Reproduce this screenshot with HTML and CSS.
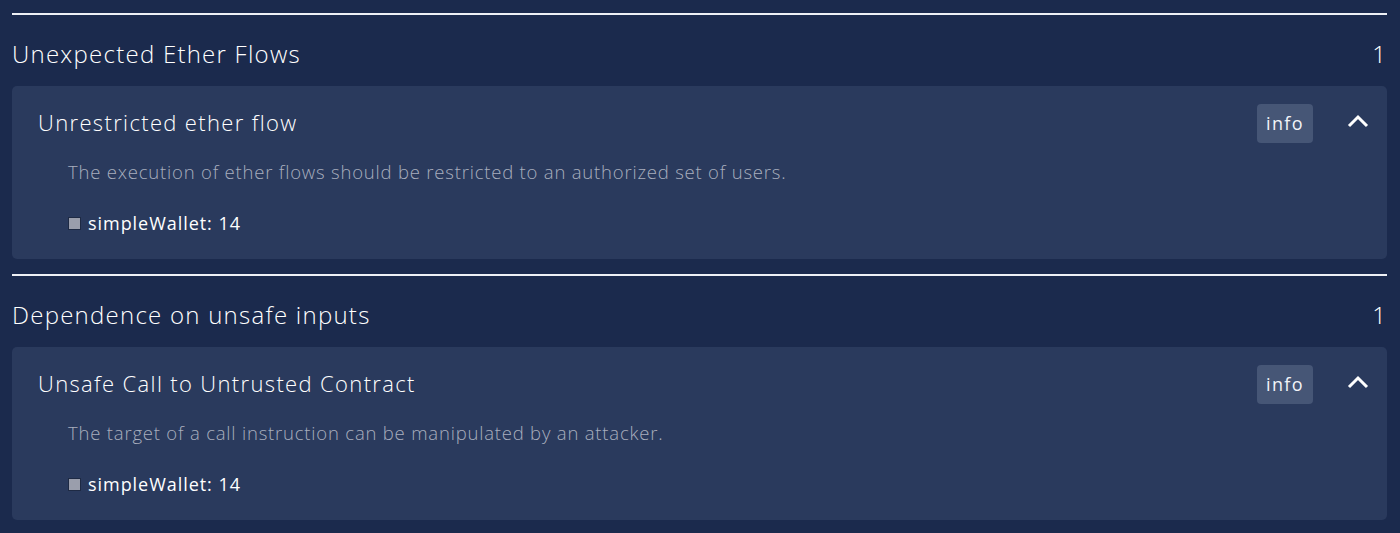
FILE: index.html
```html
<!DOCTYPE html>
<html>
<head>
<meta charset="utf-8">
<link rel="stylesheet" href="styles.css">
</head>
<body>
<main class="page">
  <section class="group">
    <div class="rule"></div>
    <div class="group-head">
      <h2 class="group-title">Unexpected Ether Flows</h2>
      <span class="group-count">1</span>
    </div>
    <div class="card">
      <div class="card-head">
        <h3 class="card-title">Unrestricted ether flow</h3>
        <div class="card-actions">
          <span class="badge">info</span>
          <svg class="chevron" width="22" height="14" viewBox="0 0 22 14"><path d="M2 12 L11 3 L20 12" fill="none" stroke="#ffffff" stroke-width="3"/></svg>
        </div>
      </div>
      <p class="card-desc">The execution of ether flows should be restricted to an authorized set of users.</p>
      <ul class="locs">
        <li class="loc"><span class="sq"></span>simpleWallet: 14</li>
      </ul>
    </div>
  </section>
  <section class="group">
    <div class="rule"></div>
    <div class="group-head">
      <h2 class="group-title">Dependence on unsafe inputs</h2>
      <span class="group-count">1</span>
    </div>
    <div class="card">
      <div class="card-head">
        <h3 class="card-title">Unsafe Call to Untrusted Contract</h3>
        <div class="card-actions">
          <span class="badge">info</span>
          <svg class="chevron" width="22" height="14" viewBox="0 0 22 14"><path d="M2 12 L11 3 L20 12" fill="none" stroke="#ffffff" stroke-width="3"/></svg>
        </div>
      </div>
      <p class="card-desc">The target of a call instruction can be manipulated by an attacker.</p>
      <ul class="locs">
        <li class="loc"><span class="sq"></span>simpleWallet: 14</li>
      </ul>
    </div>
  </section>
</main>
</body>
</html>
```
FILE: styles.css
```css
html, body {
  margin: 0;
  padding: 0;
  background: #1b2a4d;
  height: 100%;
  overflow: hidden;
}
.page {
  padding: 13px 13px 0 12px;
  font-family: "Open Sans", "DejaVu Sans", sans-serif;
  color: #ffffff;
}
.group {
  margin-bottom: 15px;
}
.rule {
  height: 2px;
  background: #eef0f5;
}
.group-head {
  display: flex;
  justify-content: space-between;
  align-items: center;
  height: 71px;
  padding-top: 5px;
  box-sizing: border-box;
}
.group-title {
  margin: 0;
  font-size: 24px;
  font-weight: 300;
  letter-spacing: 1.25px;
}
.group-count {
  font-size: 24px;
  font-weight: 300;
  margin-right: 1px;
}
.card {
  background: #2a3a5d;
  border-radius: 5px;
  padding: 17px 18px 24px 26px;
}
.card-head {
  display: flex;
  justify-content: space-between;
  align-items: center;
  height: 40px;
}
.card-title {
  margin: 0 0 3px;
  font-size: 22px;
  font-weight: 300;
  letter-spacing: 1.35px;
}
.card-actions {
  display: flex;
  align-items: center;
  gap: 34px;
}
.badge {
  display: flex;
  align-items: center;
  justify-content: center;
  width: 56px;
  height: 39px;
  border-radius: 4px;
  background: #465676;
  color: #f2f4f8;
  font-size: 18px;
  font-weight: 400;
  letter-spacing: 1.4px;
}
.chevron {
  display: block;
  margin-top: -4px;
}
.card-desc {
  margin: 17px 0 0 30px;
  font-size: 18.5px;
  line-height: 24px;
  color: #a8aebd;
  font-weight: 300;
  letter-spacing: 0.8px;
}
.locs {
  list-style: none;
  margin: 27px 0 0 30px;
  padding: 0;
}
.loc {
  display: flex;
  align-items: center;
  font-size: 18px;
  line-height: 24px;
  color: #ffffff;
  letter-spacing: 0.95px;
}
.sq {
  flex: none;
  width: 11px;
  height: 11px;
  background: #9a9eac;
  border: 1px solid #1e2a44;
  margin-right: 7px;
  margin-left: 0;
}
```
